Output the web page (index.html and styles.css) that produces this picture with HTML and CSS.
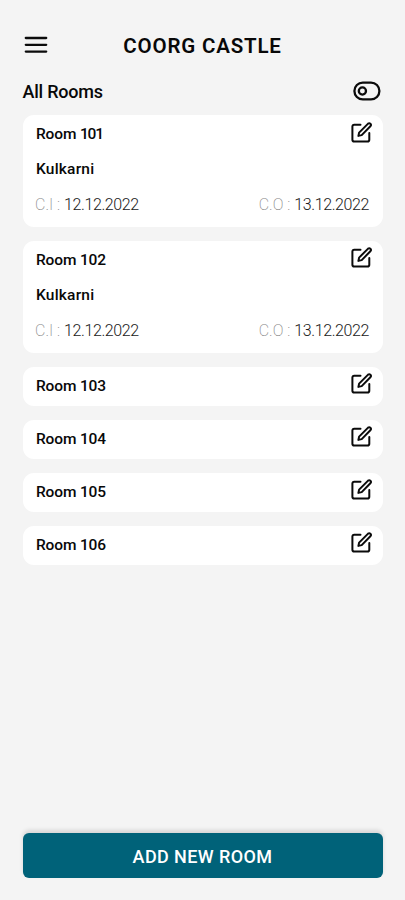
FILE: index.html
```html
<!DOCTYPE html>
<html lang="en">
<head>
<meta charset="utf-8">
<meta name="viewport" content="width=device-width">
<title>Coorg Castle</title>
<link rel="stylesheet" href="styles.css">
</head>
<body>
<svg class="defs" aria-hidden="true"><symbol id="edit" viewBox="0 0 22 22"><path d="M9.5 2.8H3.2Q1.4 2.8 1.4 4.6V17.7Q1.4 19.5 3.2 19.5H16.5Q18.3 19.5 18.3 17.7V11M7.4 13.9L8.1 10.6L17.1 1.6Q18.3.7 19.4 1.7Q20.5 2.8 19.6 4L10.7 13.1Z"/></symbol></svg>
<main class="screen">
  <header class="header">
    <svg class="menu" viewBox="0 0 24 18"><path d="M1.8 2H22.2M1.8 8.8H22.2M1.8 15.6H22.2"/></svg>
    <h1 class="title">COORG CASTLE</h1>
  </header>
  <div class="section">
    <h2 class="subtitle">All Rooms</h2>
    <svg class="toggle" viewBox="0 0 28 20"><rect x="1.4" y="1.6" width="25" height="16.8" rx="8.4"/><circle cx="9.4" cy="10" r="3.6"/></svg>
  </div>
  <div class="rooms">
    <article class="card booked">
      <div class="top"><h3 class="name">Room <span class="ones">101</span></h3><svg class="edit"><use href="#edit"/></svg></div>
      <p class="guest">Kulkarni</p>
      <div class="dates"><span class="date"><span class="label">C.I :</span><span class="value">12.12.2022</span></span><span class="date"><span class="label">C.O :</span><span class="value">13.12.2022</span></span></div>
    </article>
    <article class="card booked">
      <div class="top"><h3 class="name">Room 102</h3><svg class="edit"><use href="#edit"/></svg></div>
      <p class="guest">Kulkarni</p>
      <div class="dates"><span class="date"><span class="label">C.I :</span><span class="value">12.12.2022</span></span><span class="date"><span class="label">C.O :</span><span class="value">13.12.2022</span></span></div>
    </article>
    <article class="card"><div class="top"><h3 class="name">Room 103</h3><svg class="edit"><use href="#edit"/></svg></div></article>
    <article class="card"><div class="top"><h3 class="name">Room 104</h3><svg class="edit"><use href="#edit"/></svg></div></article>
    <article class="card"><div class="top"><h3 class="name">Room 105</h3><svg class="edit"><use href="#edit"/></svg></div></article>
    <article class="card"><div class="top"><h3 class="name">Room 106</h3><svg class="edit"><use href="#edit"/></svg></div></article>
  </div>
  <button class="add">ADD NEW ROOM</button>
</main>
</body>
</html>
```
FILE: styles.css
```css
* { box-sizing: border-box; }
body, h1, h2, h3, p { margin: 0; }
body { background: #f4f4f4; color: #080808; font-family: Roboto, sans-serif; }
svg { display: block; fill: none; stroke: #0b0b0b; stroke-width: 2; stroke-linecap: round; stroke-linejoin: round; flex: none; }
.defs { position: absolute; width: 0; height: 0; }
.screen { height: 900px; padding: 30px 22.5px 22.5px; display: flex; flex-direction: column; }
.header { height: 30px; display: grid; grid-template-columns: 1fr auto 1fr; align-items: center; }
.menu { width: 24px; height: 18px; margin: 0 0 1px 1.5px; stroke-width: 2.3; }
.title { font-size: 20.5px; line-height: 30px; font-weight: 600; letter-spacing: .82px; padding-top: 1px; }
.section { height: 55px; padding-top: 7px; display: flex; align-items: flex-start; justify-content: space-between; }
.subtitle { font-size: 18px; line-height: 30px; font-weight: 500; letter-spacing: -.22px; padding-top: 10px; }
.toggle { width: 28px; height: 20px; margin: 14px 1.5px 0 0; stroke-width: 2.3; }
.rooms { display: flex; flex-direction: column; gap: 13.7px; flex: 1; }
.card { height: 39.3px; background: #fff; border-radius: 11px; padding: 0 10px 0 13.5px; }
.booked { height: 112.2px; }
.top { display: flex; justify-content: space-between; height: 39px; }
.name, .guest { font-size: 15.5px; line-height: 39px; font-weight: 500; letter-spacing: .2px; }
.name { letter-spacing: -.15px; }
.ones { letter-spacing: -1.2px; }
.edit { width: 22px; height: 22px; margin-top: 6.6px; }
.guest { line-height: 30px; }
.dates { display: flex; justify-content: space-between; margin: 8px 3.5px 0 -1px; font-size: 16px; line-height: 26px; font-weight: 300; }
.date { display: flex; gap: 4px; }
.label { color: #888; font-weight: 200; }
.value { color: #191919; letter-spacing: -.4px; }
.add { height: 45px; border: 0; border-radius: 6px; background: #006279; color: #fff; font: 500 18px/45px Roboto, sans-serif; letter-spacing: .4px; padding: 1px 0 0; box-shadow: 0 -3px 4px rgba(0,0,0,.12); }
```
